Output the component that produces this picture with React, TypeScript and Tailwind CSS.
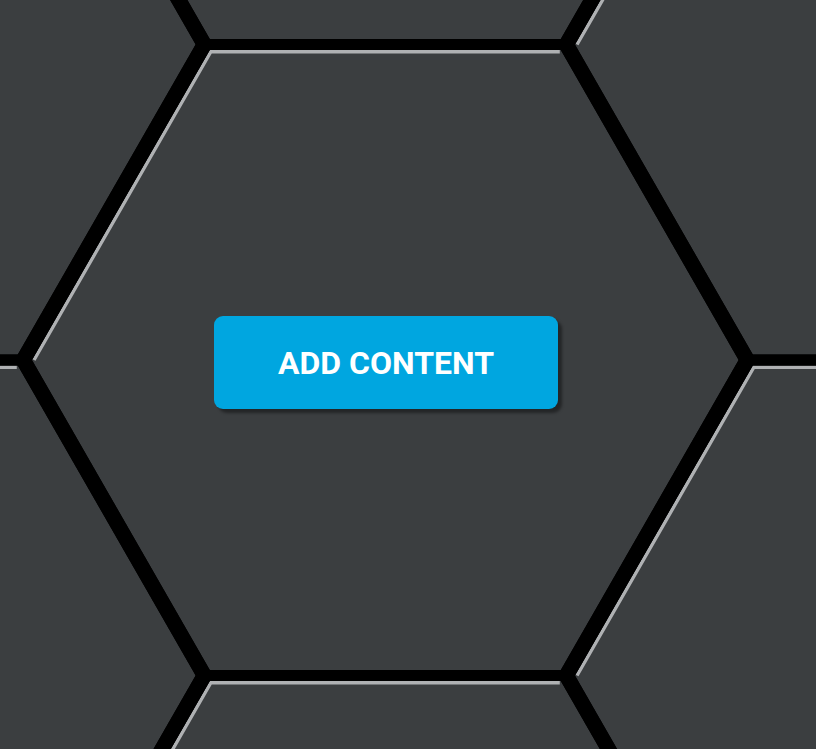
const R = 362;
const H = 315.5;
const CX = 385.3;
const CY = 360;
// band widths: horizontal edges are thinner than slanted ones in the mock
const W_FLAT = 11;
const W_SLANT = 15;
const HI = 3.5;

type Hex = { x: number; y: number };
type Pt = [number, number];

function buildHexes(): Hex[] {
  const list: Hex[] = [];
  for (let i = -2; i <= 3; i++) {
    for (let j = -2; j <= 3; j++) {
      const x = CX + i * 1.5 * R;
      const y = CY + j * 2 * H + (Math.abs(i) % 2 === 1 ? H : 0);
      list.push({ x, y });
    }
  }
  return list;
}

function corners({ x, y }: Hex): Pt[] {
  return [
    [x - R, y],
    [x - R / 2, y - H],
    [x + R / 2, y - H],
    [x + R, y],
    [x + R / 2, y + H],
    [x - R / 2, y + H],
  ];
}

function highlight({ x, y }: Hex) {
  const dh = W_FLAT / 2 + HI / 2;
  const dd = W_SLANT / 2 + HI / 2;
  const s = (dd * 2) / Math.sqrt(3);
  const k = R / (2 * H);
  const pts: Pt[] = [
    [x - R + s, y],
    [x - R / 2 + s - dh * k, y - H + dh],
    [x + R / 2 - s + dh * k, y - H + dh],
  ];
  return pts.map((p) => p.join(",")).join(" ");
}

function HexGrid() {
  const hexes = buildHexes();
  return (
    <svg
      className="absolute inset-0"
      width={816}
      height={749}
      viewBox="0 0 816 749"
    >
      {hexes.map((h, i) => (
        <polygon
          key={"f" + i}
          points={corners(h)
            .map((p) => p.join(","))
            .join(" ")}
          fill="#3b3e40"
        />
      ))}
      {hexes.map((h, i) => (
        <polyline
          key={"g" + i}
          points={highlight(h)}
          fill="none"
          stroke="#afb1b3"
          strokeWidth={HI}
        />
      ))}
      {hexes.map((h, i) => {
        const c = corners(h);
        return c.map((p, k) => {
          const q = c[(k + 1) % 6];
          const flat = Math.abs(p[1] - q[1]) < 1;
          return (
            <line
              key={"b" + i + "-" + k}
              x1={p[0]}
              y1={p[1]}
              x2={q[0]}
              y2={q[1]}
              stroke="#000"
              strokeWidth={flat ? W_FLAT : W_SLANT}
            />
          );
        });
      })}
    </svg>
  );
}

export default function App() {
  return (
    <div className="relative h-[749px] w-[816px] overflow-hidden bg-[#3b3e40]">
      <HexGrid />
      <div className="relative flex pl-[214px] pt-[316px]">
        <button
          type="button"
          className="flex h-[93px] w-[344px] items-center justify-center rounded-[9px] bg-[#00a6e0] text-[32px] font-bold text-white shadow-[4px_4px_3px_rgba(0,0,0,0.4)]"
          style={{ fontFamily: "Roboto, 'Liberation Sans', sans-serif" }}
        >
          ADD CONTENT
        </button>
      </div>
    </div>
  );
}
